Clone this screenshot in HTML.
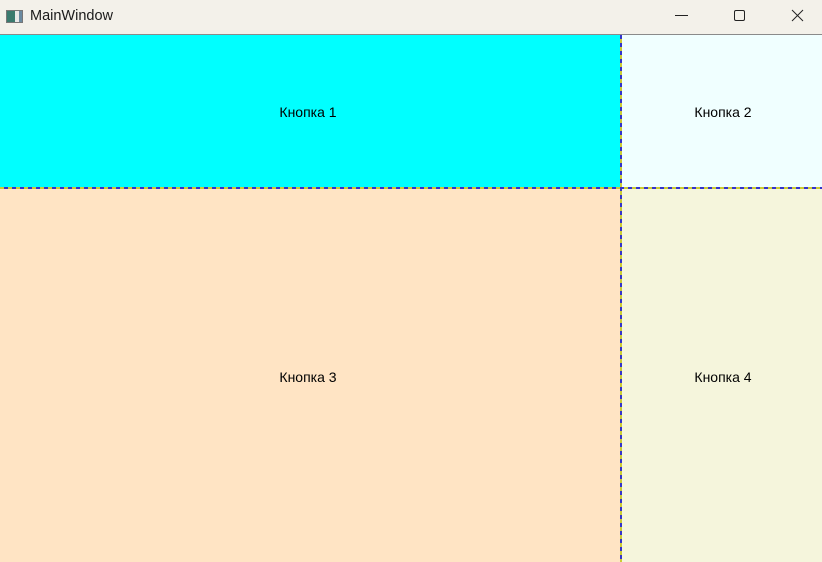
<!DOCTYPE html>
<html><head><meta charset="utf-8"><style>
*{margin:0;padding:0;box-sizing:border-box}
body{width:822px;height:562px;overflow:hidden;font-family:"Segoe UI","Liberation Sans",sans-serif;background:#fff;position:relative}
.tb{position:absolute;left:0;top:0;width:822px;height:35px;background:#f3f1ea;border-bottom:1px solid #8a8a8a}
.tb .t{position:absolute;left:30px;top:8px;font-size:14.5px;color:#1a1a1a}
.ic{position:absolute;left:6px;top:10px;width:17px;height:13px;border:1px solid #777;background:linear-gradient(90deg,#3a7a6e 0 55%,#e8e8e8 55% 80%,#6a8aa0 80%)}
.c{position:absolute;display:flex;align-items:center;justify-content:center;font-size:14px;color:#000;padding-top:2px}
.v{position:absolute;left:620px;top:35px;width:2px;height:527px;background:repeating-linear-gradient(180deg,#3333cc 0 4px,#cccc33 4px 8px)}
.h{position:absolute;left:0;top:187px;width:822px;height:2px;background:repeating-linear-gradient(90deg,#cccc33 0 4px,#3333cc 4px 8px)}
</style></head><body>
<div class="tb"><div class="ic"></div><div class="t">MainWindow</div>
<svg style="position:absolute;left:660px;top:0" width="162" height="34">
<line x1="15" y1="15.5" x2="28" y2="15.5" stroke="#222" stroke-width="1"/>
<rect x="74.5" y="10.5" width="10" height="10" rx="1.5" fill="none" stroke="#222"/>
<line x1="132" y1="10" x2="143" y2="21" stroke="#222"/><line x1="143" y1="10" x2="132" y2="21" stroke="#222"/>
</svg></div>
<div class="c" style="left:0;top:35px;width:616px;height:152px;background:#00ffff">Кнопка 1</div>
<div class="c" style="left:622px;top:35px;width:200px;height:152px;background:#f0ffff;padding-left:2px">Кнопка 2</div>
<div class="c" style="left:0;top:189px;width:616px;height:373px;background:#ffe4c4">Кнопка 3</div>
<div class="c" style="left:622px;top:189px;width:200px;height:373px;background:#f5f5dc;padding-left:2px">Кнопка 4</div>
<div style="position:absolute;left:616px;top:189px;width:4px;height:373px;background:#ffe4c4"></div>
<div style="position:absolute;left:616px;top:35px;width:4px;height:152px;background:#00ffff"></div>
<div class="h"></div><div class="v"></div>
</body></html>
